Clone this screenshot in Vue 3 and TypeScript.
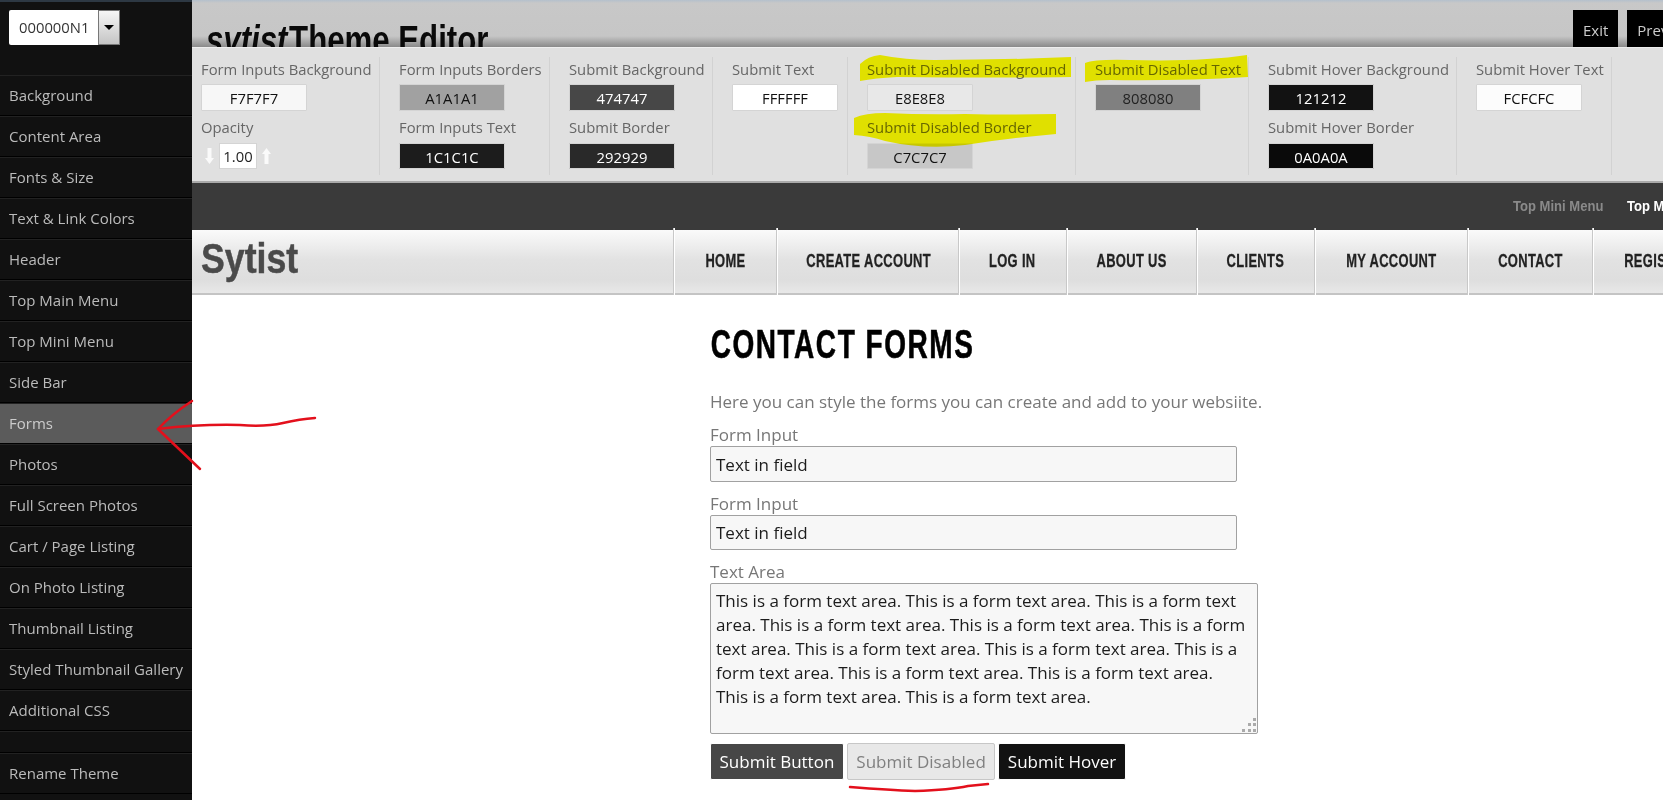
<script setup lang="ts">
interface Field {
  label: string
  value: string
  bg: string
  fg: string
}
interface Col {
  top: Field
  bottom?: Field
  opacity?: boolean
}

const sideItems = [
  'Background', 'Content Area', 'Fonts & Size', 'Text & Link Colors', 'Header',
  'Top Main Menu', 'Top Mini Menu', 'Side Bar', 'Forms', 'Photos', 'Full Screen Photos',
  'Cart / Page Listing', 'On Photo Listing', 'Thumbnail Listing',
  'Styled Thumbnail Gallery', 'Additional CSS',
]

const cols: Col[] = [
  { top: { label: 'Form Inputs Background', value: 'F7F7F7', bg: '#f7f7f7', fg: '#111' }, opacity: true },
  {
    top: { label: 'Form Inputs Borders', value: 'A1A1A1', bg: '#a1a1a1', fg: '#111' },
    bottom: { label: 'Form Inputs Text', value: '1C1C1C', bg: '#1c1c1c', fg: '#fff' },
  },
  {
    top: { label: 'Submit Background', value: '474747', bg: '#474747', fg: '#fff' },
    bottom: { label: 'Submit Border', value: '292929', bg: '#292929', fg: '#fff' },
  },
  { top: { label: 'Submit Text', value: 'FFFFFF', bg: '#ffffff', fg: '#111' } },
  {
    top: { label: 'Submit Disabled Background', value: 'E8E8E8', bg: '#e8e8e8', fg: '#111' },
    bottom: { label: 'Submit Disabled Border', value: 'C7C7C7', bg: '#c7c7c7', fg: '#111' },
  },
  { top: { label: 'Submit Disabled Text', value: '808080', bg: '#808080', fg: '#222' } },
  {
    top: { label: 'Submit Hover Background', value: '121212', bg: '#121212', fg: '#fff' },
    bottom: { label: 'Submit Hover Border', value: '0A0A0A', bg: '#0a0a0a', fg: '#fff' },
  },
  { top: { label: 'Submit Hover Text', value: 'FCFCFC', bg: '#fcfcfc', fg: '#111' } },
]

const navItems = ['Home', 'Create Account', 'Log In', 'About Us', 'Clients', 'My Account', 'Contact', 'Register']
const areaText = 'This is a form text area. '.repeat(13).trim()
</script>

<template>
  <div class="page">
    <aside class="side">
      <div class="picker">
        <span class="picker-val">000000N1</span>
        <span class="picker-btn"><i></i></span>
      </div>
      <ul class="side-list">
        <li v-for="item in sideItems" :key="item" :class="{ active: item === 'Forms' }">{{ item }}</li>
        <li class="spacer"></li>
        <li>Rename Theme</li>
      </ul>
    </aside>

    <main class="main">
      <header class="top">
        <h1 class="title"><em>sytist</em>Theme Editor</h1>
        <div class="top-btns">
          <a>Exit</a>
          <a>Preview</a>
        </div>
      </header>

      <section class="panel">
        <div v-for="col in cols" :key="col.top.label" class="col">
          <label>{{ col.top.label }}</label>
          <div class="swatch" :style="{ background: col.top.bg, color: col.top.fg }">{{ col.top.value }}</div>
          <template v-if="col.bottom">
            <label class="second">{{ col.bottom.label }}</label>
            <div class="swatch low" :style="{ background: col.bottom.bg, color: col.bottom.fg }">{{ col.bottom.value }}</div>
          </template>
          <template v-if="col.opacity">
            <label class="second">Opacity</label>
            <div class="opacity">
              <svg width="9" height="16" viewBox="0 0 9 16"><path d="M2.500 0h4v10H9l-4.500 6L0 10h2.500z" fill="#fafafa" /></svg>
              <span class="op-val">1.00</span>
              <svg width="9" height="16" viewBox="0 0 9 16"><path d="M2.500 16h4V6H9L4.500 0 0 6h2.500z" fill="#fafafa" /></svg>
            </div>
          </template>
        </div>
      </section>

      <div class="mini">
        <a><span>Top Mini Menu</span></a>
        <a class="on"><span>Top Mini Menu</span></a>
      </div>

      <nav class="nav">
        <div class="logo"><span>Sytist</span></div>
        <ul class="nav-list">
          <li v-for="item in navItems" :key="item"><span>{{ item }}</span></li>
        </ul>
      </nav>

      <section class="content">
        <h2><span>Contact Forms</span></h2>
        <p class="intro">Here you can style the forms you can create and add to your websiite.</p>
        <label class="f-label">Form Input</label>
        <input class="f-input first" type="text" value="Text in field" />
        <label class="f-label">Form Input</label>
        <input class="f-input" type="text" value="Text in field" />
        <label class="f-label">Text Area</label>
        <div class="area-wrap">
          <textarea class="f-area" :value="areaText"></textarea>
          <svg class="grip" width="14" height="14" viewBox="0 0 14 14" fill="#aaa">
            <rect x="11" y="0" width="3" height="3" />
            <rect x="6" y="5" width="3" height="3" />
            <rect x="11" y="5" width="3" height="3" />
            <rect x="0" y="11" width="3" height="3" />
            <rect x="6" y="11" width="3" height="3" />
            <rect x="11" y="11" width="3" height="3" />
          </svg>
        </div>
        <div class="btns">
          <button class="b-main">Submit Button</button>
          <button class="b-off">Submit Disabled</button>
          <button class="b-hover">Submit Hover</button>
        </div>
      </section>
    </main>

    <!-- hand drawn marks on top of the screenshot -->
    <svg class="marks" width="1663" height="800" viewBox="0 0 1663 800">
      <g class="marker" fill="#ffff00">
        <path d="M860 64 Q868 56 880 55 Q905 60 935 60 Q1000 60 1071 57 L1071 77 Q1000 78 897 77 Q875 78 860 81 Z" />
        <path d="M854 118 Q865 113 885 113 Q925 115 965 114 Q1010 115 1056 114 L1056 134 Q1010 138 965 145 Q925 150 885 141 Q870 136 854 135 Z" />
        <path d="M1085 63 Q1095 59 1130 60 Q1200 62 1247 55 L1248 77 Q1180 81 1110 80 Q1095 80 1085 82 Z" />
      </g>
      <g fill="none" stroke="#e3101c" stroke-width="2.500" stroke-linecap="round" stroke-linejoin="round">
        <path d="M315 418 Q300 419 283 423 Q265 427 240 425 Q200 424 158 429" />
        <path d="M192 401 Q172 414 158 429 Q178 448 200 469" />
        <path d="M850 787 Q890 790 915 791 Q950 790 968 786 Q978 785 988 784" />
      </g>
    </svg>
  </div>
</template>

<style>
html, body {
  margin: 0;
  background: #fff;
  overflow: hidden;
}
</style>

<style scoped>
.page {
  position: relative;
  display: flex;
  width: 1663px;
  height: 800px;
  overflow: hidden;
  font-family: "Open Sans", "Noto Sans", sans-serif;
}

/* left menu */
.side {
  flex: 0 0 192px;
  box-sizing: border-box;
  background: #111;
  border-top: 2px solid #2d3843;
  color: #bbb;
  font-size: 15px;
}
.picker {
  display: flex;
  margin: 8px 0 0 9px;
  width: 111px;
  height: 35px;
  background: #fff;
  border-radius: 2px;
  color: #333;
  font-size: 14.800px;
}
.picker-val {
  flex: 1;
  padding-left: 10px;
  line-height: 35px;
}
.picker-btn {
  display: flex;
  align-items: center;
  justify-content: center;
  width: 20px;
  border: 1px solid #777;
  background: linear-gradient(#f6f6f6, #c4c4c4);
}
.picker-btn i {
  border: 5px solid transparent;
  border-top: 5px solid #000;
  border-bottom: 0;
}
.side-list {
  list-style: none;
  margin: 30px 0 0;
  padding: 0;
}
.side-list li {
  height: 39px;
  line-height: 39px;
  padding-left: 9px;
  border-top: 1px solid #222;
  border-bottom: 1px solid #000;
  white-space: nowrap;
}
.side-list li.active {
  background: #5b5b5b;
  color: #ccc;
}
.side-list li.spacer {
  height: 20px;
}

/* header */
.main {
  flex: 1;
  min-width: 0;
  position: relative;
}
.top {
  position: relative;
  height: 47px;
  overflow: hidden;
  background: linear-gradient(#b4c0cc 0, #c8c8c8 3px, #c6c6c6 36px, #8a8a8a 47px);
}
.title {
  margin: 0;
  padding: 15px 0 0 14px;
  font: 700 40px/50px "Liberation Sans", sans-serif;
  color: #0a0a0a;
  white-space: nowrap;
  transform: scaleX(0.78);
  transform-origin: 14px 0;
}
.title em {
  margin-right: 2px;
}
.top-btns {
  position: absolute;
  top: 10px;
  left: 1381px;
  display: flex;
  gap: 9px;
}
.top-btns a {
  height: 37px;
  line-height: 41px;
  padding: 0 10px;
  background: #000;
  color: #ccc;
  font-size: 15px;
}

/* colour panel */
.panel {
  display: grid;
  grid-template-columns: 188px 170px 163px 135px 228px 173px 208px 155px;
  height: 136px;
  box-sizing: border-box;
  background: #e0e0e0;
  border-top: 1px solid #eee;
  border-bottom: 2px solid #aaa;
  padding-top: 9px;
  color: #666;
  font-size: 14.800px;
}
.col {
  height: 118px;
  padding-left: 19px;
  border-right: 1px solid #d2d2d2;
  white-space: nowrap;
}
.col:first-child {
  padding-left: 9px;
}
.col label {
  display: block;
  height: 24px;
  line-height: 24px;
}
.col label.second {
  margin-top: 4px;
  height: 28px;
}
.swatch {
  width: 106px;
  height: 27px;
  line-height: 27px;
  margin-top: 3px;
  box-sizing: border-box;
  text-align: center;
  border: 1px solid #d4d4d4;
  border-radius: 1px;
}
.swatch.low {
  height: 26px;
  line-height: 26px;
  margin-top: 0;
}
.opacity {
  display: flex;
  align-items: center;
  gap: 5px;
  height: 26px;
  padding-left: 4px;
}
.op-val {
  width: 38px;
  height: 26px;
  line-height: 24px;
  box-sizing: border-box;
  border: 1px solid #d4d4d4;
  background: #fff;
  color: #222;
  text-align: center;
}

/* mini menu */
.mini {
  display: flex;
  height: 47px;
  padding-left: 1321px;
  background: #3a3a3a;
  font: 700 15px/46px "Liberation Sans", sans-serif;
  color: #8a8a8a;
  white-space: nowrap;
}
.mini a {
  flex: 0 0 114px;
}
.mini span {
  display: inline-block;
  transform: scaleX(0.87);
  transform-origin: left;
}
.mini .on {
  color: #fff;
}

/* site nav */
.nav {
  display: flex;
  height: 65px;
  box-sizing: border-box;
  border-bottom: 2px solid #c4c4c4;
  background: linear-gradient(#fafafa 0, #e2e2e2 30px, #dedede 50px, #e8e8e8 100%);
}
.logo {
  flex: 0 0 481px;
  padding-left: 9px;
  box-sizing: border-box;
  font: 700 42px/57px "Liberation Sans", sans-serif;
  color: #4a4a4a;
  -webkit-text-stroke: 0.5px #4a4a4a;
}
.logo span {
  display: inline-block;
  transform: scaleX(0.85);
  transform-origin: left;
}
.nav-list {
  list-style: none;
  display: grid;
  grid-template-columns: 103px 182px 108px 130px 118px 153px 125px 132px;
  margin: -2px 0 0;
  padding: 0;
  height: 67px;
  font: 700 19px/66px "Liberation Sans", sans-serif;
  color: #222;
  -webkit-text-stroke: 0.3px #222;
  text-transform: uppercase;
  letter-spacing: 0.5px;
  white-space: nowrap;
}
.nav-list li {
  text-align: center;
  border-left: 1px solid #c8c8c8;
  box-shadow: inset 1px 0 0 #fff;
}
.nav-list span {
  display: inline-block;
  transform: scaleX(0.68);
}

/* page content */
.content {
  width: 550px;
  margin-left: 518px;
  color: #777;
  font-size: 17px;
}
.content h2 {
  margin: 24px 0 0;
  font: 700 40px/50px "Liberation Sans", sans-serif;
  color: #000;
  -webkit-text-stroke: 0.6px #000;
  text-transform: uppercase;
  white-space: nowrap;
}
.content h2 span {
  display: inline-block;
  transform: scaleX(0.7);
  transform-origin: left;
  padding-left: 1px;
  letter-spacing: 2.200px;
}
.intro {
  margin: 21px 0 0;
  line-height: 23px;
  white-space: nowrap;
}
.f-label {
  display: block;
  height: 21px;
  line-height: 21px;
  margin-top: 11px;
}
.f-input,
.f-area {
  display: block;
  box-sizing: border-box;
  font-family: inherit;
  font-size: 17px;
  color: #1c1c1c;
  background: #f7f7f7;
  border: 1px solid #a1a1a1;
  border-radius: 2px;
  padding: 5px;
  outline: none;
}
.f-input {
  width: 527px;
  height: 35px;
  margin-top: 1px;
}
.f-input.first {
  height: 36px;
}
.area-wrap {
  position: relative;
  width: 548px;
  margin-top: 1px;
}
.f-area {
  width: 548px;
  height: 151px;
  line-height: 24px;
  padding-right: 10px;
  resize: none;
}
.grip {
  position: absolute;
  right: 2px;
  bottom: 2px;
}
.btns {
  display: flex;
  gap: 3px;
  margin-top: 9px;
}
.btns button {
  height: 37px;
  padding: 0 8.500px;
  font-family: inherit;
  font-size: 17px;
  border-radius: 2px;
  border: 1px solid;
}
.b-main {
  background: #474747;
  border-color: #292929;
  color: #fff;
}
.b-off {
  background: #e8e8e8;
  border-color: #c7c7c7 !important;
  color: #808080;
}
.b-hover {
  background: #121212;
  border-color: #0a0a0a;
  color: #fcfcfc;
}

/* annotations */
.marks {
  position: absolute;
  top: 0;
  left: 0;
  pointer-events: none;
}
.marker {
  mix-blend-mode: multiply;
}
</style>
